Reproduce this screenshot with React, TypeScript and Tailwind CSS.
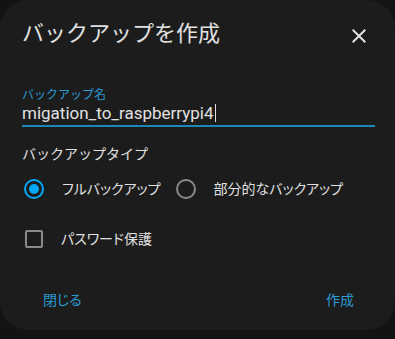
import { MdClose } from "react-icons/md";

const jp = "font-['Roboto','Noto_Sans_CJK_JP',sans-serif]";

const Radio = ({ checked, label }: { checked?: boolean; label: string }) => (
  <div className="flex items-center">
    <div className="flex h-10 w-10 items-center justify-center">
      <div
        className={
          checked
            ? "flex h-5 w-5 items-center justify-center rounded-full border-2 border-[#03a9f4]"
            : "h-5 w-5 rounded-full border-2 border-[#8a8a8a]"
        }
      >
        {checked && <div className="h-[10px] w-[10px] rounded-full bg-[#03a9f4]" />}
      </div>
    </div>
    <span className="ml-[8px] text-[14px] leading-5 text-[#e1e1e1] [font-feature-settings:'palt']">
      {label}
    </span>
  </div>
);

export default function App() {
  return (
    <div className={`h-[339px] w-[395px] overflow-hidden bg-[#131313] ${jp}`}>
      <div className="h-[330px] w-full rounded-[28px] bg-[#1c1c1c]">
        <div className="flex items-center justify-between pl-[22px] pr-[24px] pt-[19px]">
          <h1 className="text-[22px] leading-7 text-[#e1e1e1]">バックアップを作成</h1>
          <MdClose className="mt-[5px] text-[24px] text-[#e1e1e1]" />
        </div>

        <div className="mx-[22px] mt-[39px] mr-[20px]">
          <div className="text-[12px] leading-4 text-[#2b9bd3]">バックアップ名</div>
          <div className="flex h-[24px] items-center border-b-2 border-[#1f86b9] pb-[2px] text-[17px] leading-6 text-[#e1e1e1]">
            migation_to_raspberrypi4
            <span className="ml-[1px] h-[18px] w-px bg-[#e1e1e1]" />
          </div>
        </div>

        <div className="ml-[22px] mt-[17px] text-[14px] leading-5 text-[#e1e1e1]">
          バックアップタイプ
        </div>

        <div className="ml-[14px] mt-[5px] flex items-center">
          <Radio checked label="フルバックアップ" />
          <div className="ml-[5px]">
            <Radio label="部分的なバックアップ" />
          </div>
        </div>

        <div className="ml-[14px] mt-[10px] flex items-center">
          <div className="flex h-10 w-10 items-center justify-center">
            <div className="h-[18px] w-[18px] rounded-[2px] border-2 border-[#8a8a8a]" />
          </div>
          <span className="ml-[7px] text-[14px] leading-5 text-[#e1e1e1] [font-feature-settings:'palt']">
            パスワード保護
          </span>
        </div>

        <div className="mt-[31px] flex items-center justify-between pl-[43px] pr-[41px] text-[14px] leading-5 text-[#2b9bd3] [font-feature-settings:'palt']">
          <span>閉じる</span>
          <span>作成</span>
        </div>
      </div>
    </div>
  );
}
